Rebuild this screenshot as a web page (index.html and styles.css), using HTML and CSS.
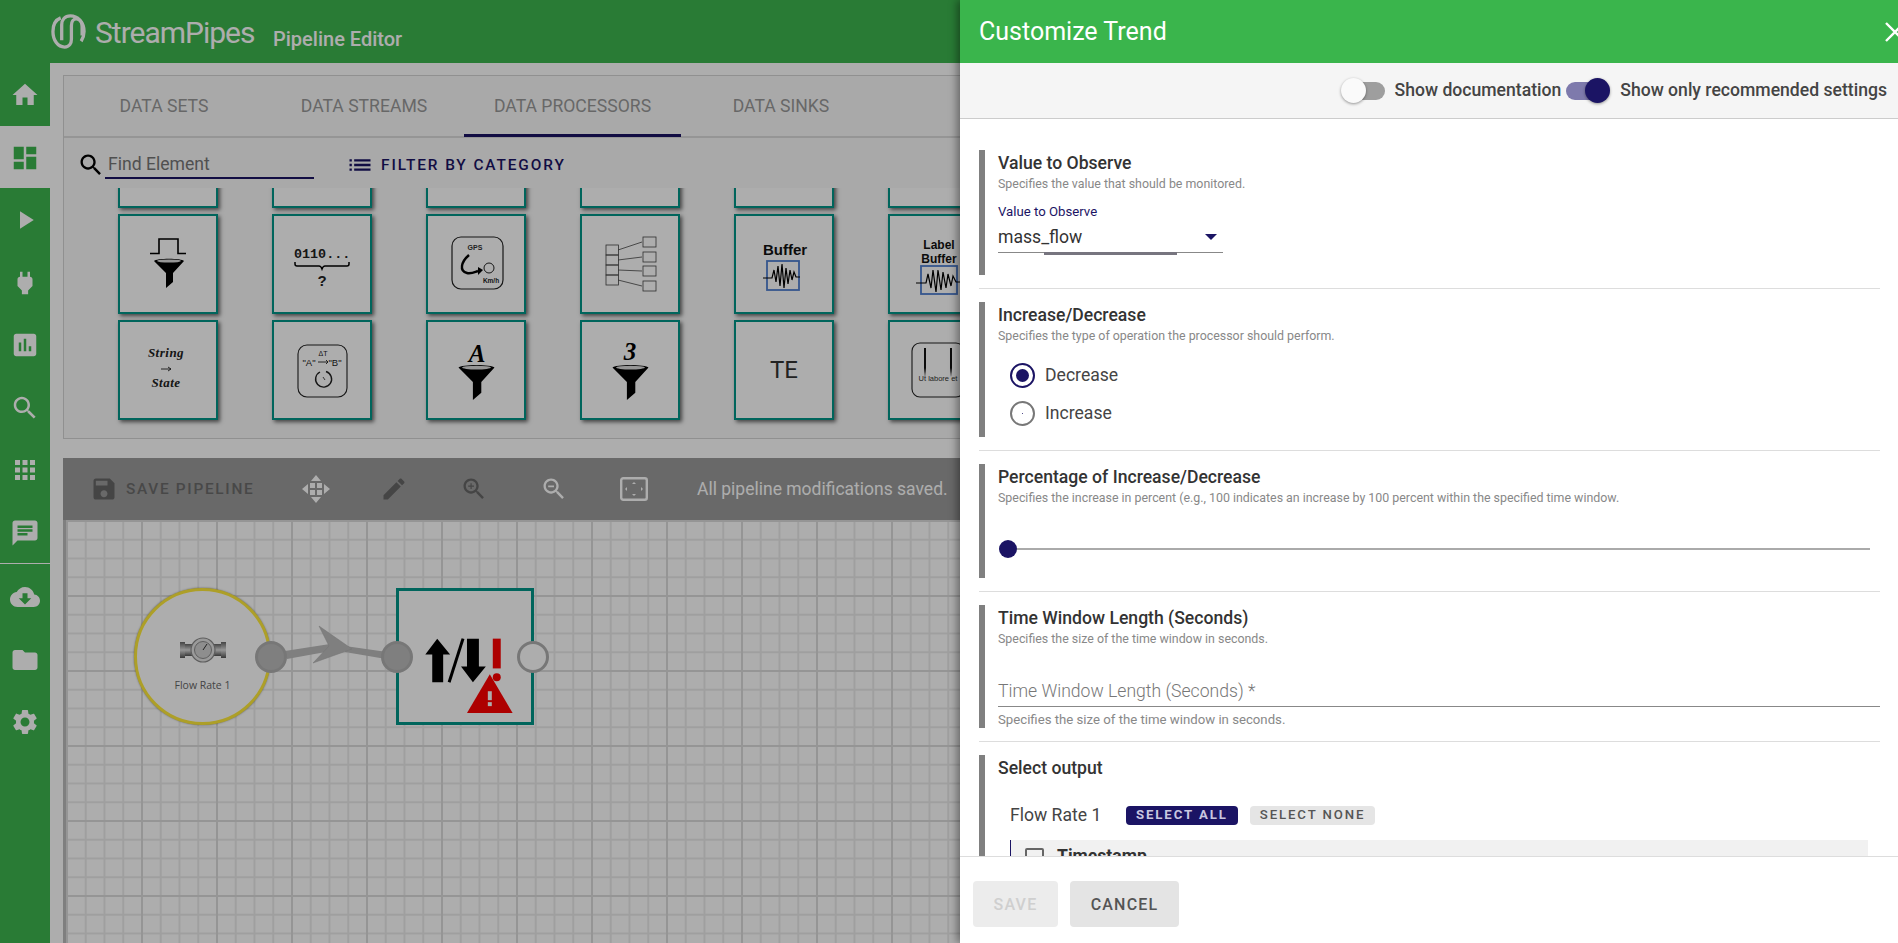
FILE: index.html
```html
<!DOCTYPE html>
<html lang="en">

<head>
    <meta charset="UTF-8">
    <meta name="viewport" content="width=device-width, initial-scale=1.0">
    <title>Pipeline Editor</title>
    <link rel="stylesheet" href="styles.css">
</head>

<body>
    <svg class="defs" width="0" height="0">
        <symbol id="funnel" viewBox="0 0 30 30">
            <path d="M0 3C2 0 28 0 30 3L19 15V24L12 30V15Z" fill="#000" />
            <ellipse cx="15" cy="3" rx="12" ry="1.6" fill="#ddd" />
        </symbol>
        <linearGradient id="pipe" x1="0" y1="0" x2="0" y2="1">
            <stop offset="0" stop-color="#666" />
            <stop offset="0.5" stop-color="#ddd" />
            <stop offset="1" stop-color="#555" />
        </linearGradient>
    </svg>

    <div class="app">
        <header class="top-bar">
            <svg class="logo" viewBox="0 0 36 36" fill="none" stroke="#fff" stroke-width="3.4">
                <path d="M10 4C5 6 2 11 2 18C2 27 7 34 14 34C19 34 21 30 21 26V12C21 8 23 5 26 5C30 5 32 9 32 13V22" />
                <path d="M11 27V11C11 6 14 2 20 2C27 2 34 8 34 18C34 22 33 25 31 28" />
            </svg>
            <span class="logo-text">StreamPipes</span>
            <span class="page-title">Pipeline Editor</span>
        </header>

        <div class="main">
            <nav class="sidebar">
                <a class="nav-item"><svg viewBox="0 0 24 24"><path d="M10 20v-6h4v6h5v-8h3L12 3 2 12h3v8z" /></svg></a>
                <a class="nav-item active"><svg viewBox="0 0 24 24"><path d="M3 13h8V3H3v10zm0 8h8v-6H3v6zm10 0h8V11h-8v10zm0-18v6h8V3h-8z" /></svg></a>
                <a class="nav-item"><svg viewBox="0 0 24 24"><path d="M8 5v14l11-7z" /></svg></a>
                <a class="nav-item"><svg viewBox="0 0 24 24"><path d="M16 7V3h-2v4h-4V3H8v4H7.99C6.9 7 6 7.9 6 8.99v5.49L9.5 18v3h5v-3l3.5-3.51V9c0-1.1-.9-2-2-2z" /></svg></a>
                <a class="nav-item"><svg viewBox="0 0 24 24"><path d="M19 3H5c-1.1 0-2 .9-2 2v14c0 1.1.9 2 2 2h14c1.1 0 2-.9 2-2V5c0-1.1-.9-2-2-2zM9 17H7v-7h2v7zm4 0h-2V7h2v10zm4 0h-2v-4h2v4z" /></svg></a>
                <a class="nav-item"><svg viewBox="0 0 24 24"><path d="M15.5 14h-.79l-.28-.27C15.41 12.59 16 11.11 16 9.5 16 5.91 13.09 3 9.5 3S3 5.91 3 9.5 5.91 16 9.5 16c1.61 0 3.09-.59 4.23-1.57l.27.28v.79l5 4.99L20.49 19l-4.99-5zm-6 0C7.01 14 5 11.99 5 9.5S7.01 5 9.5 5 14 7.01 14 9.5 11.99 14 9.5 14z" /></svg></a>
                <a class="nav-item"><svg viewBox="0 0 24 24"><path d="M4 8h4V4H4v4zm6 12h4v-4h-4v4zm-6 0h4v-4H4v4zm0-6h4v-4H4v4zm6 0h4v-4h-4v4zm6-10v4h4V4h-4zm-6 4h4V4h-4v4zm6 6h4v-4h-4v4zm0 6h4v-4h-4v4z" /></svg></a>
                <a class="nav-item"><svg viewBox="0 0 24 24"><path d="M20 2H4c-1.1 0-1.99.9-1.99 2L2 22l4-4h14c1.1 0 2-.9 2-2V4c0-1.1-.9-2-2-2zM6 9h12v2H6V9zm8 5H6v-2h8v2zm4-6H6V6h12v2z" /></svg></a>
                <div class="nav-divider"></div>
                <a class="nav-item"><svg viewBox="0 0 24 24"><path d="M19.35 10.04C18.67 6.59 15.64 4 12 4 9.11 4 6.6 5.64 5.35 8.04 2.34 8.36 0 10.91 0 14c0 3.31 2.69 6 6 6h13c2.76 0 5-2.24 5-5 0-2.64-2.05-4.78-4.65-4.96zM17 13l-5 5-5-5h3V9h4v4h3z" /></svg></a>
                <a class="nav-item"><svg viewBox="0 0 24 24"><path d="M10 4H4c-1.1 0-1.99.9-1.99 2L2 18c0 1.1.9 2 2 2h16c1.1 0 2-.9 2-2V8c0-1.1-.9-2-2-2h-8l-2-2z" /></svg></a>
                <a class="nav-item"><svg viewBox="0 0 24 24"><path d="M19.14 12.94c.04-.3.06-.61.06-.94 0-.32-.02-.64-.07-.94l2.03-1.58c.18-.14.23-.41.12-.61l-1.92-3.32c-.12-.22-.37-.29-.59-.22l-2.39.96c-.5-.38-1.03-.7-1.62-.94l-.36-2.54c-.04-.24-.24-.41-.48-.41h-3.84c-.24 0-.43.17-.47.41l-.36 2.54c-.59.24-1.13.57-1.62.94l-2.39-.96c-.22-.08-.47 0-.59.22L2.74 8.87c-.12.21-.08.47.12.61l2.03 1.58c-.05.3-.09.63-.09.94s.02.64.07.94l-2.03 1.58c-.18.14-.23.41-.12.61l1.92 3.32c.12.22.37.29.59.22l2.39-.96c.5.38 1.03.7 1.62.94l.36 2.54c.05.24.24.41.48.41h3.84c.24 0 .44-.17.47-.41l.36-2.54c.59-.24 1.13-.56 1.62-.94l2.39.96c.22.08.47 0 .59-.22l1.92-3.32c.12-.22.07-.47-.12-.61l-2.01-1.58zM12 15.6c-1.98 0-3.6-1.62-3.6-3.6s1.62-3.6 3.6-3.6 3.6 1.62 3.6 3.6-1.62 3.6-3.6 3.6z" /></svg></a>
            </nav>

            <div class="content">
                <section class="palette">
                    <div class="tabs">
                        <div class="tab">DATA SETS</div>
                        <div class="tab">DATA STREAMS</div>
                        <div class="tab active">DATA PROCESSORS</div>
                        <div class="tab">DATA SINKS</div>
                    </div>
                    <div class="search-row">
                        <svg class="search-icon" viewBox="0 0 24 24"><path d="M15.5 14h-.79l-.28-.27C15.41 12.59 16 11.11 16 9.5 16 5.91 13.09 3 9.5 3S3 5.91 3 9.5 5.91 16 9.5 16c1.61 0 3.09-.59 4.23-1.57l.27.28v.79l5 4.99L20.49 19l-4.99-5zm-6 0C7.01 14 5 11.99 5 9.5S7.01 5 9.5 5 14 7.01 14 9.5 11.99 14 9.5 14z" /></svg>
                        <div class="search-input">Find Element</div>
                        <div class="filter-btn">
                            <svg viewBox="0 0 24 24"><path d="M3 13h2v-2H3v2zm0 4h2v-2H3v2zm0-8h2V7H3v2zm4 4h14v-2H7v2zm0 4h14v-2H7v2zM7 7v2h14V7H7z" /></svg>
                            FILTER BY CATEGORY
                        </div>
                    </div>
                    <div class="palette-scroll">
                        <div class="palette-grid">
                            <div class="card"></div>
                            <div class="card"></div>
                            <div class="card"></div>
                            <div class="card"></div>
                            <div class="card"></div>
                            <div class="card"></div>

                            <div class="card">
                                <svg viewBox="0 0 96 96">
                                    <polyline points="30,37.5 39,37.5 39,23 58,23 58,37.5 66,37.5" fill="none" stroke="#000" stroke-width="1.6" />
                                    <use href="#funnel" x="34" y="42" width="30" height="30" />
                                </svg>
                            </div>
                            <div class="card">
                                <svg viewBox="0 0 96 96">
                                    <text x="20" y="42" class="mono">0110...</text>
                                    <path d="M21 46v2q0 2 2 2h22q2 0 3 3q1-3 3-3h22q2 0 2-2v-2" fill="none" stroke="#000" stroke-width="1.5" />
                                    <text x="48" y="70" class="question">?</text>
                                </svg>
                            </div>
                            <div class="card">
                                <svg viewBox="0 0 96 96">
                                    <rect x="24" y="21" width="51" height="52" rx="9" fill="none" stroke="#222" stroke-width="1.2" />
                                    <text x="47" y="34" class="gps">GPS</text>
                                    <path d="M41 39C33 46 31 55 39 57C43 58 47 56 50 55" fill="none" stroke="#000" stroke-width="2.4" />
                                    <path d="M50 51L55 54L50 59Z" fill="#000" />
                                    <circle cx="61" cy="52" r="5" fill="none" stroke="#222" stroke-width="1" />
                                    <text x="63" y="67" class="kmh">Km/h</text>
                                </svg>
                            </div>
                            <div class="card">
                                <svg viewBox="0 0 96 96" fill="none" stroke="#444" stroke-width="0.8">
                                    <rect x="24" y="29" width="12.5" height="10" />
                                    <rect x="24" y="39" width="12.5" height="10" />
                                    <rect x="24" y="49" width="12.5" height="10" />
                                    <rect x="24" y="59" width="12.5" height="10" />
                                    <rect x="61" y="21" width="13" height="10" />
                                    <rect x="61" y="36" width="13" height="10" />
                                    <rect x="61" y="50" width="13" height="10" />
                                    <rect x="61" y="65" width="13" height="10" />
                                    <path d="M36 34L60 26M36 44L60 41M36 54L60 55M36 64L60 70" />
                                </svg>
                            </div>
                            <div class="card">
                                <svg viewBox="0 0 96 96">
                                    <text x="49" y="39" class="buffer-label">Buffer</text>
                                    <rect x="31" y="45" width="32" height="29" fill="none" stroke="#4f7fd0" stroke-width="1.8" />
                                    <polyline points="27,62 36,62 38,54 40,66 42,50 44,70 46,48 48,72 50,52 52,68 54,54 56,64 58,56 60,61 64,61" fill="none" stroke="#000" stroke-width="1.2" />
                                </svg>
                            </div>
                            <div class="card">
                                <svg viewBox="0 0 96 96">
                                    <text x="49" y="33" class="buffer-label small">Label</text>
                                    <text x="49" y="47" class="buffer-label small">Buffer</text>
                                    <rect x="31" y="50" width="36" height="28" fill="none" stroke="#4f7fd0" stroke-width="1.8" />
                                    <polyline points="26,67 36,67 38,58 41,72 43,54 46,76 48,54 51,74 53,56 56,72 58,58 61,70 63,60 66,66 70,66" fill="none" stroke="#000" stroke-width="1.2" />
                                </svg>
                            </div>

                            <div class="card">
                                <svg viewBox="0 0 96 96">
                                    <text x="46" y="35" class="serif">String</text>
                                    <path d="M41 47H51M48 45L51 47L48 49" fill="none" stroke="#222" stroke-width="0.9" />
                                    <text x="46" y="65" class="serif">State</text>
                                </svg>
                            </div>
                            <div class="card">
                                <svg viewBox="0 0 96 96">
                                    <rect x="24" y="23" width="49" height="52" rx="9" fill="none" stroke="#222" stroke-width="1.1" />
                                    <text x="49" y="34" class="timer-text small">&#916;T</text>
                                    <text x="35" y="44" class="timer-text">"A"</text>
                                    <text x="61" y="44" class="timer-text">"B"</text>
                                    <path d="M44 40H54M52 38L54 40L52 42" fill="none" stroke="#222" stroke-width="0.9" />
                                    <path d="M46 50A8 8 0 1 0 52 49.5" fill="none" stroke="#222" stroke-width="1.4" />
                                    <path d="M49 55L51 58" stroke="#222" stroke-width="0.8" />
                                </svg>
                            </div>
                            <div class="card">
                                <svg viewBox="0 0 96 96">
                                    <text x="49" y="40" class="letter">A</text>
                                    <use href="#funnel" x="30" y="42" width="37" height="36" />
                                </svg>
                            </div>
                            <div class="card">
                                <svg viewBox="0 0 96 96">
                                    <text x="48" y="38" class="letter">3</text>
                                    <use href="#funnel" x="30" y="42" width="37" height="36" />
                                </svg>
                            </div>
                            <div class="card card-text">TE</div>
                            <div class="card">
                                <svg viewBox="0 0 96 96">
                                    <rect x="22" y="21" width="52" height="54" rx="8" fill="none" stroke="#222" stroke-width="1.1" />
                                    <path d="M34 26H36V46L35 55L34 46Z" fill="#111" />
                                    <path d="M60 26H62V46L61 55L60 46Z" fill="#111" />
                                    <text x="48" y="59" class="labore">Ut labore et</text>
                                </svg>
                            </div>
                        </div>
                    </div>
                </section>

                <div class="pipeline-bar">
                    <svg class="bar-icon dark save-icon" viewBox="0 0 24 24"><path d="M17 3H5c-1.11 0-2 .9-2 2v14c0 1.1.89 2 2 2h14c1.1 0 2-.9 2-2V7l-4-4zm-5 16c-1.66 0-3-1.34-3-3s1.34-3 3-3 3 1.34 3 3-1.34 3-3 3zm3-10H5V5h10v4z" /></svg>
                    <span class="save-label">SAVE PIPELINE</span>
                    <svg class="bar-icon move-icon" viewBox="0 0 28 28">
                        <path d="M14 0L19 6H9ZM14 28L9 22H19ZM0 14L6 9V19ZM28 14L22 19V9Z" />
                        <rect x="8" y="8" width="5" height="5" />
                        <rect x="15" y="8" width="5" height="5" />
                        <rect x="8" y="15" width="5" height="5" />
                        <rect x="15" y="15" width="5" height="5" />
                    </svg>
                    <svg class="bar-icon dark pencil-icon" viewBox="0 0 24 24"><path d="M3 17.25V21h3.75L17.81 9.94l-3.75-3.75L3 17.25zM20.71 7.04c.39-.39.39-1.02 0-1.41l-2.34-2.34c-.39-.39-1.02-.39-1.41 0l-1.83 1.83 3.75 3.75 1.83-1.83z" /></svg>
                    <svg class="bar-icon dark zoomin-icon" viewBox="0 0 24 24"><path d="M15.5 14h-.79l-.28-.27C15.41 12.59 16 11.11 16 9.5 16 5.91 13.09 3 9.5 3S3 5.91 3 9.5 5.91 16 9.5 16c1.61 0 3.09-.59 4.23-1.57l.27.28v.79l5 4.99L20.49 19l-4.99-5zm-6 0C7.01 14 5 11.99 5 9.5S7.01 5 9.5 5 14 7.01 14 9.5 11.99 14 9.5 14zM12 10h-2v2H9v-2H7V9h2V7h1v2h2v1z" /></svg>
                    <svg class="bar-icon zoomout-icon" viewBox="0 0 24 24"><path d="M15.5 14h-.79l-.28-.27C15.41 12.59 16 11.11 16 9.5 16 5.91 13.09 3 9.5 3S3 5.91 3 9.5 5.91 16 9.5 16c1.61 0 3.09-.59 4.23-1.57l.27.28v.79l5 4.99L20.49 19l-4.99-5zm-6 0C7.01 14 5 11.99 5 9.5S7.01 5 9.5 5 14 7.01 14 9.5 11.99 14 9.5 14zM7 9h5v1.5H7z" /></svg>
                    <svg class="bar-icon fit-icon" viewBox="0 0 28 24">
                        <rect x="1.2" y="1.2" width="25.6" height="21.6" rx="2" fill="none" stroke="#fff" stroke-width="2.4" />
                        <path d="M14 5L16 7H12ZM14 19L12 17H16ZM5 12L7 10V14ZM23 12L21 14V10Z" />
                    </svg>
                    <span class="save-status">All pipeline modifications saved.</span>
                </div>

                <div class="canvas">
                    <div class="stream-node">
                        <svg class="meter-icon" viewBox="0 0 46 26">
                            <rect x="0" y="5" width="5" height="16" fill="url(#pipe)" />
                            <rect x="5" y="7" width="9" height="12" fill="url(#pipe)" />
                            <rect x="41" y="5" width="5" height="16" fill="url(#pipe)" />
                            <rect x="32" y="7" width="9" height="12" fill="url(#pipe)" />
                            <circle cx="23" cy="13" r="12" fill="#e4e4e4" stroke="#8a8a8a" stroke-width="1.2" />
                            <circle cx="23" cy="13" r="8.5" fill="#d2d2d2" stroke="#777" stroke-width="0.8" />
                            <path d="M23 13L27 7" stroke="#333" stroke-width="1" />
                        </svg>
                        <span>Flow Rate 1</span>
                    </div>
                    <svg class="connector" viewBox="280 620 110 50">
                        <path d="M285 651L330 644L331 651L287 659Z" fill="#bbb" />
                        <path d="M345 646L387 652L386 659L345 652Z" fill="#bbb" />
                        <polygon points="319,626 352,649 313,663 329,646" fill="#bbb" stroke="#aaa" stroke-width="0.5" />
                    </svg>
                    <div class="processor-node">
                        <svg viewBox="399 591 132 132">
                            <polygon points="425,655 437,639 450,655 443,655 443,683 432,683 432,655" fill="#000" />
                            <path d="M463 639L449 683" stroke="#000" stroke-width="3" />
                            <polygon points="467,639 479,639 479,667 486,667 473,683 461,667 467,667" fill="#000" />
                            <rect x="493" y="639" width="8" height="30" fill="#f00" />
                            <circle cx="497" cy="678" r="4" fill="#f00" />
                            <polygon points="490,675 467,714 513,714" fill="#f00" />
                            <rect x="488" y="692" width="4" height="9" fill="#fff" />
                            <rect x="488" y="703" width="4" height="4" fill="#fff" />
                        </svg>
                    </div>
                    <div class="endpoint filled stream-out"></div>
                    <div class="endpoint filled proc-in"></div>
                    <div class="endpoint proc-out"></div>
                </div>
            </div>
        </div>
    </div>

    <div class="overlay"></div>

    <aside class="customize">
        <div class="customize-head">
            <h2>Customize Trend</h2>
            <svg class="close-icon" viewBox="0 0 20 20"><path d="M1 1L19 19M19 1L1 19" stroke="#fff" stroke-width="2.4" /></svg>
        </div>
        <div class="customize-tools">
            <div class="toggle"><span class="track"></span><span class="thumb"></span></div>
            <span class="toggle-label">Show documentation</span>
            <div class="toggle on"><span class="track"></span><span class="thumb"></span></div>
            <span class="toggle-label">Show only recommended settings</span>
        </div>

        <div class="customize-body">
            <div class="section select-section">
                <h3>Value to Observe</h3>
                <p class="desc">Specifies the value that should be monitored.</p>
                <label class="field-label">Value to Observe</label>
                <div class="select-box">mass_flow<span class="select-arrow"></span></div>
                <div class="select-ghost"></div>
            </div>
            <hr>
            <div class="section radio-section">
                <h3>Increase/Decrease</h3>
                <p class="desc">Specifies the type of operation the processor should perform.</p>
                <div class="radio-row checked"><span class="radio"></span>Decrease</div>
                <div class="radio-row"><span class="radio"></span>Increase</div>
            </div>
            <hr>
            <div class="section slider-section">
                <h3>Percentage of Increase/Decrease</h3>
                <p class="desc">Specifies the increase in percent (e.g., 100 indicates an increase by 100 percent within the specified time window.</p>
                <div class="slider"><span class="slider-thumb"></span><span class="slider-track"></span></div>
            </div>
            <hr>
            <div class="section input-section">
                <h3>Time Window Length (Seconds)</h3>
                <p class="desc">Specifies the size of the time window in seconds.</p>
                <div class="text-input">Time Window Length (Seconds) *</div>
                <p class="hint">Specifies the size of the time window in seconds.</p>
            </div>
            <hr>
            <div class="section output-section">
                <h3>Select output</h3>
                <div class="output-row">
                    <span class="output-name">Flow Rate 1</span>
                    <button class="chip chip-all">SELECT ALL</button>
                    <button class="chip">SELECT NONE</button>
                </div>
                <div class="property-row"><span class="checkbox"></span><strong>Timestamp</strong></div>
            </div>
        </div>

        <div class="customize-foot">
            <button class="foot-btn save">SAVE</button>
            <button class="foot-btn cancel">CANCEL</button>
        </div>
    </aside>
</body>

</html>
```

FILE: styles.css
```css
* {
    box-sizing: border-box;
}

html,
body {
    height: 100%;
}

body {
    margin: 0;
    overflow: hidden;
    font-family: Roboto, "Liberation Sans", sans-serif;
    background-color: #fff;
    color: #333;
}

.defs {
    position: absolute;
}

.app {
    display: flex;
    flex-direction: column;
    height: 100%;
}

.top-bar {
    display: flex;
    align-items: center;
    flex: 0 0 63px;
    padding-left: 51px;
    background-color: #3db54e;
    color: #fff;
}

.logo {
    width: 35px;
    height: 35px;
    margin-right: 9px;
}

.logo-text {
    width: 178px;
    margin-top: 2px;
    font-size: 30px;
    font-weight: 400;
    letter-spacing: -1px;
    white-space: nowrap;
}

.page-title {
    font-size: 20px;
    font-weight: 500;
    margin-top: 15px;
}

.main {
    display: flex;
    flex: 1;
    min-height: 0;
}

.sidebar {
    flex: 0 0 50px;
    background-color: #3db54e;
}

.nav-item {
    display: flex;
    align-items: center;
    justify-content: center;
    height: 62.5px;
    padding-top: 2px;
}

.nav-item svg {
    width: 30px;
    height: 30px;
    fill: #fff;
}

.nav-item.active {
    background-color: #fff;
}

.nav-item.active svg {
    fill: #3db54e;
}

.nav-divider {
    height: 1px;
    margin-bottom: 1px;
    background-color: #fff;
}

.content {
    display: flex;
    flex-direction: column;
    flex: 1;
    min-width: 0;
    padding: 12px 0 0 13px;
}

.palette {
    flex: 0 0 364px;
    border: 1px solid #d4d4d4;
    background-color: #f9f9f9;
}

.tabs {
    display: flex;
    height: 62px;
    border-bottom: 2px solid #dcdcdc;
}

.tab {
    display: flex;
    align-items: center;
    justify-content: center;
    flex: 0 0 200px;
    padding-top: 2px;
    font-size: 17.6px;
    color: #999;
    border-bottom: 3px solid transparent;
    margin-bottom: -1px;
}

.tab.active {
    flex-basis: 217px;
    border-bottom-color: #1b1464;
}

.search-row {
    display: flex;
    align-items: center;
    height: 50px;
    padding-left: 13px;
}

.search-icon {
    width: 28px;
    height: 28px;
    margin-top: 4px;
}

.search-input {
    width: 209px;
    height: 30px;
    margin-top: 2px;
    padding-left: 3px;
    line-height: 31px;
    font-size: 17.6px;
    color: #777;
    border-bottom: 2px solid #1b1464;
}

.filter-btn {
    display: flex;
    align-items: center;
    margin: 4px 0 0 32px;
    font-size: 15.4px;
    font-weight: 500;
    letter-spacing: 1.9px;
    color: #1b1464;
}

.filter-btn svg {
    width: 28px;
    height: 28px;
    margin-right: 7px;
    fill: #1b1464;
}

.palette-scroll {
    height: 250px;
    overflow: hidden;
}

.palette-grid {
    display: grid;
    grid-template-columns: repeat(6, 100px);
    grid-auto-rows: 100px;
    gap: 6px 54px;
    margin-top: -80px;
    padding-left: 54px;
}

.card {
    display: flex;
    align-items: center;
    justify-content: center;
    border: 2px solid #009688;
    background-color: #fff;
    box-shadow: 2px 2px 4px rgba(0, 0, 0, 0.6);
}

.card svg {
    width: 96px;
    height: 96px;
}

.card-text {
    font-size: 24px;
    color: #333;
}

.mono {
    font-family: "Liberation Mono", monospace;
    font-weight: 700;
    font-size: 13.4px;
    fill: #222;
}

.question {
    font-family: "Liberation Sans", sans-serif;
    font-weight: 700;
    font-size: 15px;
    text-anchor: middle;
    fill: #222;
}

.gps {
    font-family: "Liberation Sans", sans-serif;
    font-weight: 700;
    font-size: 7px;
    text-anchor: middle;
    fill: #333;
}

.kmh {
    font-family: "Liberation Sans", sans-serif;
    font-weight: 700;
    font-size: 6.5px;
    text-anchor: middle;
    fill: #222;
}

.buffer-label {
    font-family: "Liberation Sans", sans-serif;
    font-weight: 700;
    font-size: 15px;
    text-anchor: middle;
    fill: #111;
}

.buffer-label.small {
    font-size: 12px;
}

.serif {
    font-family: "Liberation Serif", serif;
    font-weight: 700;
    font-style: italic;
    font-size: 13px;
    letter-spacing: 0.5px;
    text-anchor: middle;
    fill: #222;
}

.timer-text {
    font-family: "Liberation Sans", sans-serif;
    font-size: 9.5px;
    text-anchor: middle;
    fill: #222;
}

.timer-text.small {
    font-size: 7px;
}

.letter {
    font-family: "Liberation Serif", serif;
    font-weight: 700;
    font-style: italic;
    font-size: 25px;
    text-anchor: middle;
    fill: #000;
}

.labore {
    font-family: "Liberation Sans", sans-serif;
    font-size: 7.5px;
    text-anchor: middle;
    fill: #333;
}

.pipeline-bar {
    display: flex;
    align-items: center;
    flex: 0 0 62px;
    margin-top: 19px;
    padding-left: 27px;
    background-color: #9b9b9b;
}

.bar-icon {
    flex: none;
    width: 28px;
    height: 28px;
    fill: #fff;
}

.bar-icon.dark {
    fill: #666;
}

.save-label {
    flex: none;
    width: 129px;
    margin-left: 8px;
    font-size: 15.4px;
    font-weight: 500;
    letter-spacing: 1.7px;
    color: #6b6b6b;
    white-space: nowrap;
}

.move-icon {
    margin-left: 47px;
}

.pencil-icon {
    margin-left: 50px;
}

.zoomin-icon {
    margin-left: 52px;
}

.zoomout-icon {
    margin-left: 52px;
}

.fit-icon {
    margin-left: 52px;
    height: 24px;
}

.save-status {
    margin-left: 49px;
    font-size: 17.5px;
    color: #fff;
    white-space: nowrap;
}

.canvas {
    position: relative;
    flex: 1;
    border-left: 3px solid #bbb;
    background-color: #fff;
    background-image:
        linear-gradient(to right, #dcdcdc 2px, transparent 2px),
        linear-gradient(to bottom, #dcdcdc 2px, transparent 2px),
        linear-gradient(to right, #ebebeb 2px, transparent 2px),
        linear-gradient(to bottom, #ebebeb 2px, transparent 2px);
    background-size: 75px 75px, 75px 75px, 18.75px 18.75px, 18.75px 18.75px;
}

.stream-node {
    position: absolute;
    left: 68px;
    top: 68px;
    display: flex;
    flex-direction: column;
    align-items: center;
    width: 137px;
    height: 137px;
    padding-top: 46px;
    border: 3px solid #ffeb3b;
    border-radius: 50%;
    background-color: #fff;
    box-shadow: 0 0 2px rgba(0, 0, 0, 0.5);
    font-family: "Open Sans", sans-serif;
    font-size: 10.5px;
    color: #666;
}

.meter-icon {
    width: 46px;
    height: 26px;
    margin-bottom: 15px;
}

.connector {
    position: absolute;
    left: 214px;
    top: 100px;
    width: 110px;
    height: 50px;
}

.processor-node {
    position: absolute;
    left: 330px;
    top: 68px;
    width: 138px;
    height: 137px;
    border: 3px solid #009688;
    background-color: #fff;
}

.processor-node svg {
    display: block;
    width: 132px;
    height: 131px;
}

.endpoint {
    position: absolute;
    top: 121px;
    width: 32px;
    height: 32px;
    border: 3px solid #b0b0b0;
    border-radius: 50%;
    background-color: #fff;
}

.endpoint.filled {
    background-color: #bbb;
}

.stream-out {
    left: 189px;
}

.proc-in {
    left: 315px;
}

.proc-out {
    left: 451px;
}

.overlay {
    position: absolute;
    inset: 0;
    background-color: rgba(0, 0, 0, 0.32);
}

.customize {
    position: absolute;
    top: 0;
    bottom: 0;
    left: 960px;
    width: 938px;
    display: flex;
    flex-direction: column;
    overflow: hidden;
    background-color: #fff;
    box-shadow: -3px 0 8px rgba(0, 0, 0, 0.4);
}

.customize-head {
    display: flex;
    align-items: center;
    justify-content: space-between;
    flex: 0 0 63px;
    padding-left: 19px;
    background-color: #3ab54c;
    color: #fff;
}

.customize-head h2 {
    margin: 0;
    font-size: 25px;
    font-weight: 400;
}

.close-icon {
    flex: none;
    width: 20px;
    height: 20px;
    margin-right: -7px;
}

.customize-tools {
    display: flex;
    align-items: center;
    justify-content: flex-end;
    flex: 0 0 56px;
    padding-right: 11px;
    background-color: #f5f5f5;
    border-bottom: 1px solid #ccc;
}

.toggle {
    position: relative;
    flex: none;
    width: 44px;
    height: 26px;
}

.track {
    position: absolute;
    right: 0;
    top: 4px;
    width: 40px;
    height: 18px;
    border-radius: 9px;
    background-color: #9e9e9e;
}

.thumb {
    position: absolute;
    left: 0;
    top: 0;
    width: 25px;
    height: 25px;
    border-radius: 50%;
    background-color: #fafafa;
    box-shadow: 0 1px 3px rgba(0, 0, 0, 0.4);
}

.toggle.on .track {
    left: 0;
    right: auto;
    background-color: #7e7aac;
}

.toggle.on .thumb {
    left: auto;
    right: 0;
    background-color: #1b1464;
}

.toggle-label {
    margin: -2px 5px 0 10px;
    font-size: 17.6px;
    font-weight: 500;
    color: #444;
    white-space: nowrap;
}

.toggle-label:last-child {
    margin-right: 0;
}

.customize-body {
    flex: 1;
    min-height: 0;
    overflow: hidden;
    padding: 31px 18px 0 19px;
}

.customize-body hr {
    height: 1px;
    margin: 13px 0;
    border: none;
    background-color: #ddd;
}

.section {
    position: relative;
    padding-left: 13px;
    border-left: 6px solid #808080;
}

.section h3 {
    margin: 0;
    font-size: 17.6px;
    font-weight: 500;
    line-height: 26px;
    color: #333;
}

.desc {
    margin: 0;
    font-size: 12.4px;
    line-height: 16px;
    color: #888;
}

.field-label {
    display: block;
    margin-top: 13px;
    font-size: 13.2px;
    line-height: 14px;
    color: #1b1464;
}

.select-box {
    display: flex;
    align-items: center;
    justify-content: space-between;
    width: 225px;
    margin-top: 6px;
    padding: 0 6px 3px 0;
    font-size: 17.6px;
    line-height: 24px;
    border-bottom: 1px solid #888;
}

.select-arrow {
    width: 0;
    height: 0;
    border-left: 6px solid transparent;
    border-right: 6px solid transparent;
    border-top: 6px solid #1b1464;
}

.select-section {
    padding-bottom: 22px;
}

.select-ghost {
    position: absolute;
    left: 59px;
    top: 102px;
    width: 133px;
    height: 3px;
    background-color: #77757f;
}

.radio-section {
    padding-bottom: 5px;
}

.radio-row {
    display: flex;
    align-items: center;
    height: 38px;
    padding-left: 12px;
    font-size: 17.6px;
    color: #444;
}

.radio-section .desc {
    margin-bottom: 12px;
}

.radio {
    position: relative;
    flex: none;
    width: 25px;
    height: 25px;
    margin-right: 10px;
    border: 2px solid #777;
    border-radius: 50%;
}

.radio::after {
    content: "";
    position: absolute;
    inset: 10px;
    border-radius: 50%;
    background-color: #1b1464;
}

.radio-row.checked .radio {
    border-color: #1b1464;
}

.radio-row.checked .radio::after {
    inset: 4px;
}

.slider-section {
    padding-bottom: 20px;
}

.slider {
    display: flex;
    align-items: center;
    height: 18px;
    margin: 34px 10px 0 1px;
}

.slider-thumb {
    flex: none;
    width: 18px;
    height: 18px;
    border-radius: 50%;
    background-color: #1b1464;
}

.slider-track {
    flex: 1;
    height: 2px;
    background-color: #aaa;
}

.text-input {
    margin-top: 32px;
    padding-bottom: 3px;
    font-size: 17.6px;
    line-height: 24px;
    color: #777;
    font-weight: 300;
    border-bottom: 1px solid #888;
}

.hint {
    margin: 5px 0 0;
    font-size: 13.2px;
    line-height: 16px;
    color: #888;
}

.output-row {
    display: flex;
    align-items: center;
    height: 30px;
    margin-top: 19px;
    padding-left: 12px;
}

.output-name {
    width: 116px;
    font-size: 17.6px;
    color: #444;
}

.chip {
    height: 19px;
    margin-right: 12px;
    padding: 0 10px 2px;
    border: none;
    border-radius: 4px;
    background-color: #e5e5e5;
    font-family: Roboto, sans-serif;
    font-size: 13.2px;
    font-weight: 500;
    letter-spacing: 1.9px;
    color: #555;
}

.chip-all {
    background-color: #1b1464;
    color: #c9c7e0;
    font-weight: 700;
}

.property-row {
    display: flex;
    align-items: flex-start;
    height: 40px;
    margin: 10px 12px 0;
    padding: 8px 0 0 14px;
    border-left: 1px solid #1b1464;
    background-color: #f1f1f1;
    font-size: 17.6px;
}

.property-row strong {
    margin-top: -2px;
}

.checkbox {
    width: 19px;
    height: 19px;
    margin-right: 13px;
    border: 2px solid #666;
    border-radius: 2px;
}

.customize-foot {
    display: flex;
    flex: 0 0 87px;
    gap: 12px;
    padding: 24px 0 0 13px;
    border-top: 1px solid #ddd;
    background-color: #fff;
}

.foot-btn {
    height: 46px;
    border: none;
    border-radius: 4px;
    font-family: Roboto, sans-serif;
    font-size: 16px;
    font-weight: 500;
    letter-spacing: 1.2px;
}

.foot-btn.save {
    width: 85px;
    background-color: #ececec;
    color: #cfcfcf;
}

.foot-btn.cancel {
    width: 109px;
    background-color: #e4e4e4;
    color: #555;
}
```
